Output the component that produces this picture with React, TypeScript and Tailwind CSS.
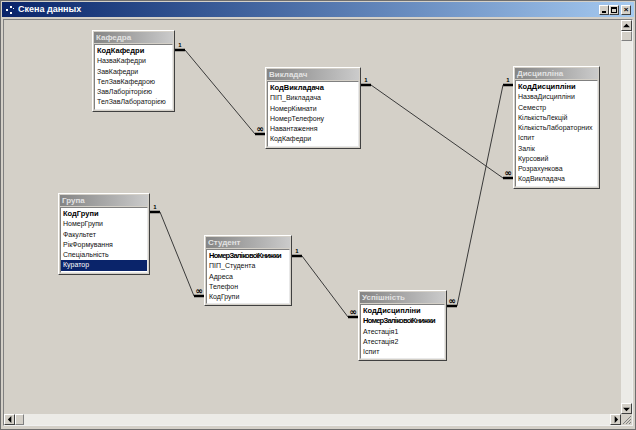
import React from 'react';

// origin of the diagram canvas in page coordinates
const OX = 4;
const OY = 19;

type Table = {
  title: string;
  x: number;
  y: number;
  w: number;
  rows: [string, boolean][];
  selected?: number;
};

const tables: Table[] = [
  {
    title: 'Кафедра',
    x: 92,
    y: 29,
    w: 83,
    rows: [
      ['КодКафедри', true],
      ['НазваКафедри', false],
      ['ЗавКафедри', false],
      ['ТелЗавКафедрою', false],
      ['ЗавЛаборіторією', false],
      ['ТелЗавЛабораторією', false],
    ],
  },
  {
    title: 'Викладач',
    x: 265,
    y: 66,
    w: 96,
    rows: [
      ['КодВикладача', true],
      ['ПІП_Викладача', false],
      ['НомерКімнати', false],
      ['НомерТелефону', false],
      ['Навантаження', false],
      ['КодКафедри', false],
    ],
  },
  {
    title: 'Дисципліна',
    x: 513,
    y: 65,
    w: 87,
    rows: [
      ['КодДисципліни', true],
      ['НазваДисципліни', false],
      ['Семестр', false],
      ['КількістьЛекцій', false],
      ['КількістьЛабораторних', false],
      ['Іспит', false],
      ['Залік', false],
      ['Курсовий', false],
      ['Розрахункова', false],
      ['КодВикладача', false],
    ],
  },
  {
    title: 'Група',
    x: 58,
    y: 192,
    w: 92,
    selected: 5,
    rows: [
      ['КодГрупи', true],
      ['НомерГрупи', false],
      ['Факультет', false],
      ['РікФормування', false],
      ['Спеціальність', false],
      ['Куратор', false],
    ],
  },
  {
    title: 'Студент',
    x: 204,
    y: 234,
    w: 88,
    rows: [
      ['НомерЗаліковоїКнижки', true],
      ['ПІП_Студента', false],
      ['Адреса', false],
      ['Телефон', false],
      ['КодГрупи', false],
    ],
  },
  {
    title: 'Успішність',
    x: 358,
    y: 289,
    w: 89,
    rows: [
      ['КодДисципліни', true],
      ['НомерЗаліковоїКнижки', true],
      ['Атестація1', false],
      ['Атестація2', false],
      ['Іспит', false],
    ],
  },
];

// one-to-many links: the "1" end and the "∞" end, page coords
type Link = { a: [number, number]; adir: 1 | -1; b: [number, number]; bdir: 1 | -1 };

const links: Link[] = [
  { a: [175, 49], adir: 1, b: [265, 133], bdir: -1 },
  { a: [361, 84], adir: 1, b: [513, 177], bdir: -1 },
  { a: [513, 84], adir: -1, b: [447, 305], bdir: 1 },
  { a: [150, 211], adir: 1, b: [204, 295], bdir: -1 },
  { a: [292, 255], adir: 1, b: [358, 316], bdir: -1 },
];

function TableBox({ t }: { t: Table }) {
  return (
    <div
      className="absolute flex flex-col border border-t-white border-l-white border-r-[#404040] border-b-[#404040] bg-[#d4d0c8] p-[1px]"
      style={{ left: t.x - OX, top: t.y - OY, width: t.w }}
    >
      <div className="h-[11px] overflow-hidden whitespace-nowrap bg-linear-to-r from-[#858585] to-[#cbcbcb] px-[2px] text-[8px] font-bold leading-[11px] text-[#e2e2e2]">
        {t.title}
      </div>
      <div className="mt-[1px] border border-t-[#808080] border-l-[#808080] border-r-[#e8e8e8] border-b-[#e8e8e8] bg-white py-[1px]">
        {t.rows.map(([name, key], i) => (
          <div
            key={name + i}
            className={
              'h-[10.25px] overflow-hidden whitespace-nowrap px-[2px] leading-[10.25px] ' +
              (key ? 'text-[7.5px] font-bold text-black ' : 'text-[7px] text-[#111] ') +
              (name.length > 18 && key ? 'tracking-[-0.75px] ' : '') +
              (t.selected === i ? 'bg-[#0a246a] text-white' : '')
            }
          >
            {name}
          </div>
        ))}
      </div>
    </div>
  );
}

function Links() {
  return (
    <svg className="absolute" width="640" height="420" style={{ left: -OX, top: -OY }}>
      {links.map((l, i) => {
        const ax = l.a[0] + l.adir * 10;
        const bx = l.b[0] + l.bdir * 10;
        return (
          <g key={i}>
            <line x1={l.a[0]} y1={l.a[1]} x2={ax} y2={l.a[1]} stroke="#000" strokeWidth="2.5" />
            <line x1={ax} y1={l.a[1]} x2={bx} y2={l.b[1]} stroke="#3a3a3a" strokeWidth="1" />
            <line x1={bx} y1={l.b[1]} x2={l.b[0]} y2={l.b[1]} stroke="#000" strokeWidth="2.5" />
            <text
              x={l.a[0] + l.adir * 5}
              y={l.a[1] - 3}
              textAnchor="middle"
              fontSize="6"
              fontWeight="bold"
              fontFamily="Liberation Sans, sans-serif"
            >
              1
            </text>
            <text
              x={l.b[0] + l.bdir * 5}
              y={l.b[1] - 2}
              textAnchor="middle"
              fontSize="9"
              fontWeight="bold"
              fontFamily="DejaVu Sans, sans-serif"
            >
              ∞
            </text>
          </g>
        );
      })}
    </svg>
  );
}

function Arrow({ dir }: { dir: 'up' | 'down' | 'left' | 'right' }) {
  const pts = {
    up: '1.5,5 5.5,1 9.5,5',
    down: '1.5,2 5.5,6 9.5,2',
    left: '5,1.5 1,5.5 5,9.5',
    right: '2,1.5 6,5.5 2,9.5',
  }[dir];
  const vertical = dir === 'up' || dir === 'down';
  return (
    <div className="flex h-[11px] w-[11px] shrink-0 items-center justify-center border border-t-white border-l-white border-r-[#404040] border-b-[#404040] bg-[#d4d0c8]">
      <svg width={vertical ? 9 : 6} height={vertical ? 6 : 9} viewBox={vertical ? '1 0 9 7' : '0 1 7 9'}>
        <polygon points={pts} fill="#000" />
      </svg>
    </div>
  );
}

function CaptionButton({ children }: { children: React.ReactNode }) {
  return (
    <div className="flex h-[10px] w-[10px] items-center justify-center border border-t-white border-l-white border-r-[#404040] border-b-[#404040] bg-[#d4d0c8]">
      {children}
    </div>
  );
}

export default function App() {
  return (
    <div
      className="flex h-[430px] w-[636px] flex-col border border-[#6e6e6e] bg-[#d4d0c8] p-[1px] pb-[3px]"
      style={{ fontFamily: '"Liberation Sans", Arial, sans-serif' }}
    >
      {/* caption */}
      <div className="flex h-[15px] shrink-0 items-center bg-linear-to-r from-[#0a246a] to-[#a6caf0] pl-[3px] pr-[3px]">
        <svg width="11" height="10" viewBox="0 0 11 10" className="mr-[2px]">
          <rect x="1" y="4" width="2" height="2" fill="#fff" />
          <rect x="5" y="1" width="2" height="2" fill="#fff" />
          <rect x="5" y="7" width="2" height="2" fill="#fff" />
          <rect x="8" y="3" width="1" height="1" fill="#fff" />
        </svg>
        <span className="text-[9px] font-bold leading-none text-white">Скена данных</span>
        <div className="ml-auto flex items-center">
          <CaptionButton>
            <div className="mt-[4px] h-[2px] w-[4px] bg-black" />
          </CaptionButton>
          <CaptionButton>
            <div className="h-[6px] w-[6px] border border-t-2 border-black" />
          </CaptionButton>
          <div className="ml-[2px]">
            <CaptionButton>
              <span className="text-[8px] font-bold leading-none text-black">×</span>
            </CaptionButton>
          </div>
        </div>
      </div>

      {/* client area */}
      <div className="mx-[1px] mt-[2px] flex flex-1 flex-col border border-t-[#808080] border-l-[#808080] border-r-[#f0f0f0] border-b-[#f0f0f0]">
        <div className="flex flex-1">
          <div className="relative flex-1 overflow-hidden bg-[#d4d0c8]">
            <Links />
            {tables.map((t) => (
              <TableBox key={t.title} t={t} />
            ))}
          </div>
          {/* vertical scrollbar */}
          <div className="flex w-[11px] flex-col bg-[#ecebe7]">
            <Arrow dir="up" />
            <div className="h-[10px] border border-t-white border-l-white border-r-[#808080] border-b-[#808080] bg-[#d4d0c8]" />
            <div className="flex-1" />
            <Arrow dir="down" />
          </div>
        </div>
        {/* horizontal scrollbar */}
        <div className="flex h-[11px]">
          <div className="flex flex-1 bg-[#ecebe7]">
            <Arrow dir="left" />
            <div className="w-[9px] border border-t-white border-l-white border-r-[#808080] border-b-[#808080] bg-[#d4d0c8]" />
            <div className="flex-1" />
            <Arrow dir="right" />
          </div>
          <div className="relative w-[11px] bg-[#d4d0c8]">
            <svg width="11" height="11" className="absolute left-0 top-0">
              <line x1="10" y1="2" x2="2" y2="10" stroke="#808080" />
              <line x1="10" y1="5" x2="5" y2="10" stroke="#808080" />
              <line x1="10" y1="8" x2="8" y2="10" stroke="#808080" />
            </svg>
          </div>
        </div>
      </div>
    </div>
  );
}
